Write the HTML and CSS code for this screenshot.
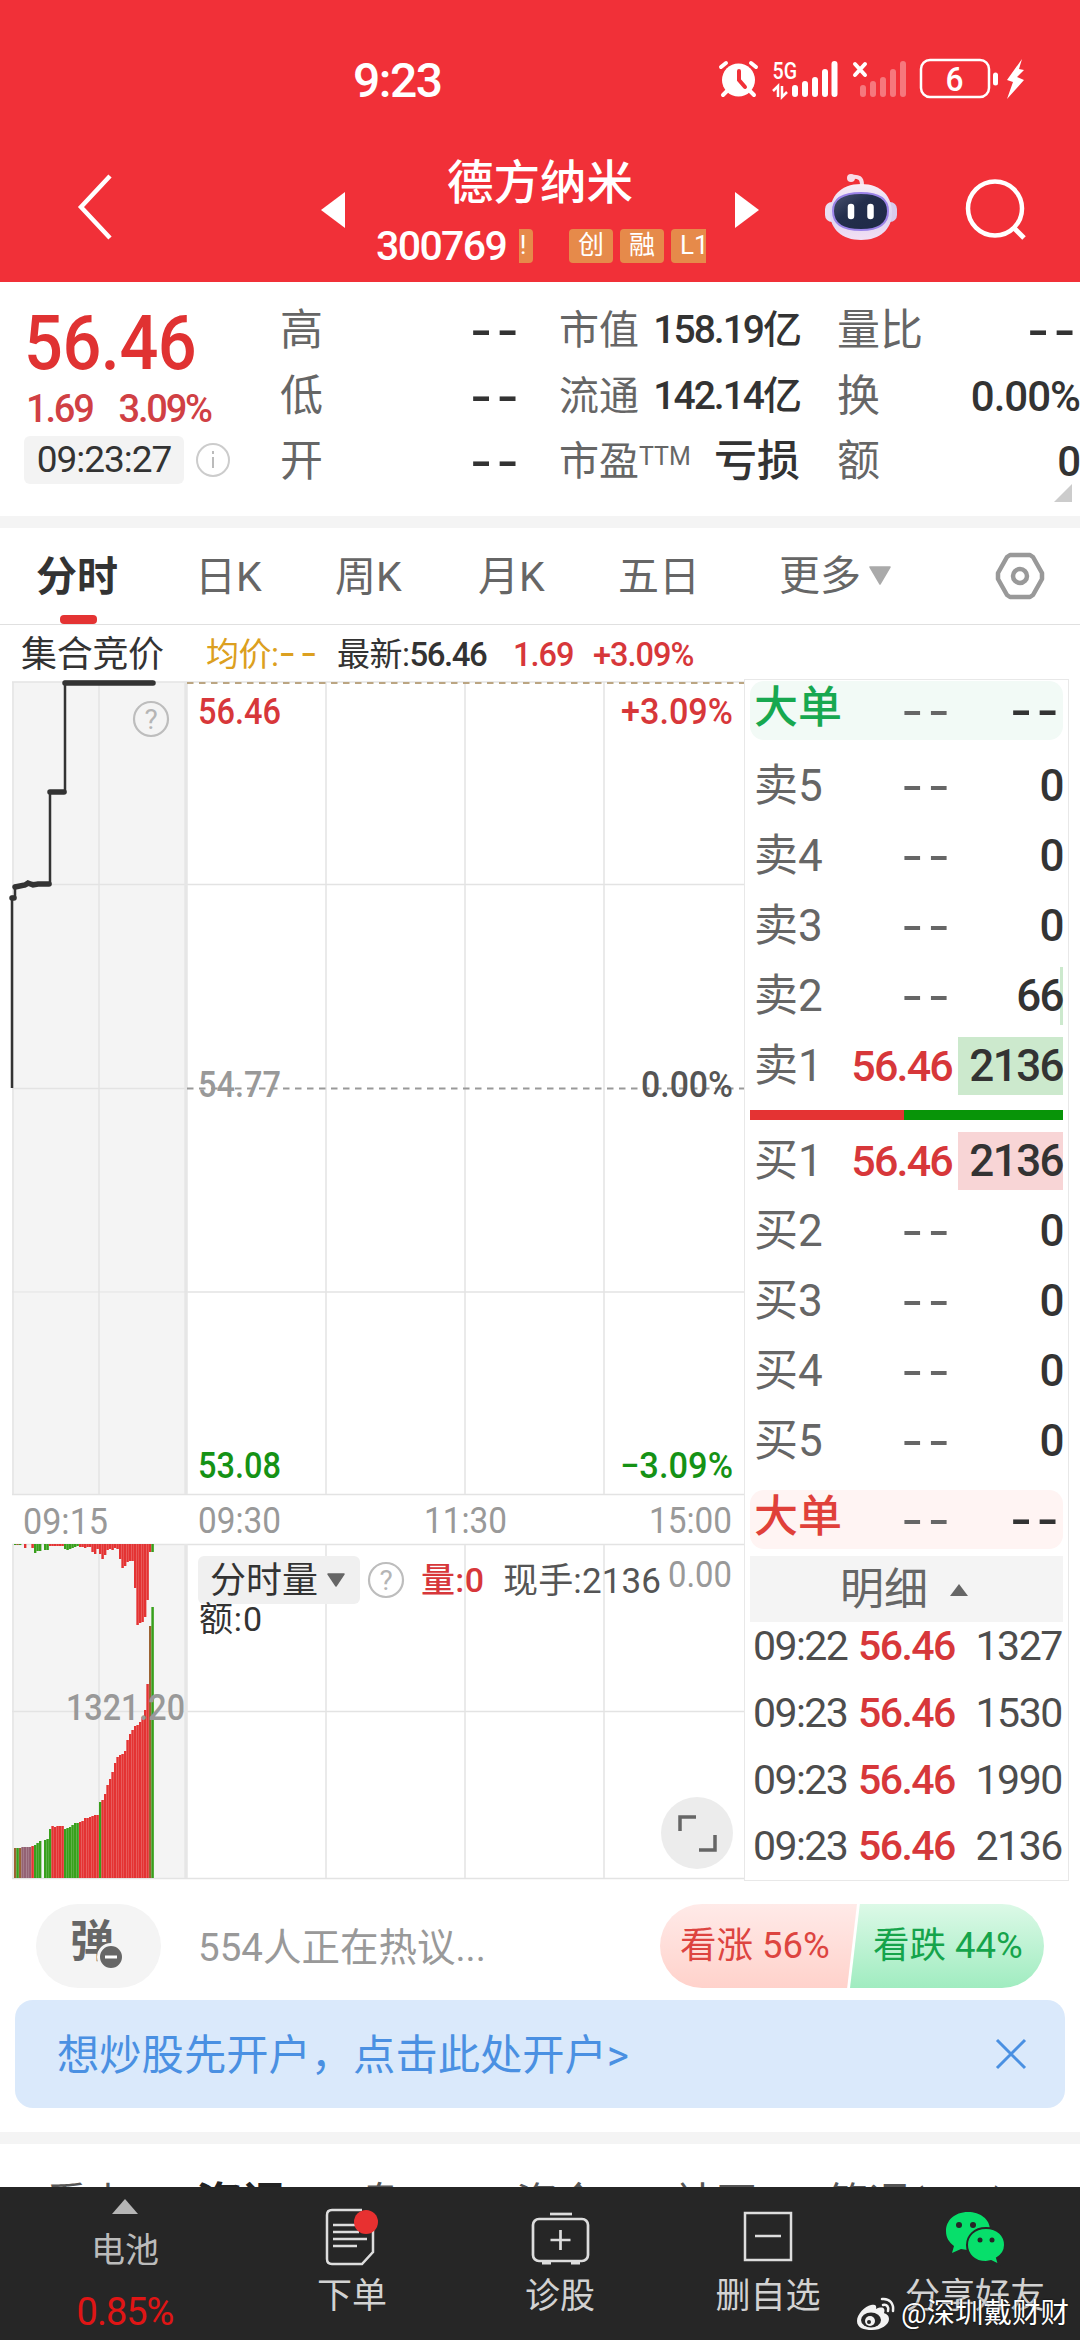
FILE: index.html
```html
<!DOCTYPE html>
<html lang="zh-CN">
<head>
<meta charset="utf-8">
<title>德方纳米 300769</title>
<link rel="stylesheet" href="styles.css">
</head>
<body>
<header class="top">
  <div class="status">
    <span class="clock">9:23</span>
    <svg class="status-icons" width="310" height="46" viewBox="716 56 310 46">
      <g fill="none" stroke="#fff" stroke-linecap="round">
        <circle cx="738.500" cy="80" r="16.500" fill="#fff" stroke="none"/>
        <path d="M721 67l5-4M756 67l-5-4M727 91l-4 4M750 91l4 4" stroke-width="4"/>
        <path d="M739 71v9l6 7" stroke="#f13038" stroke-width="4"/>
        <path d="M795 88v6M805 84v10M815 80v14M825 72v22M834.500 64v30" stroke-width="6"/>
        <path d="M863 88v6M873 84v10M883 80v14M893 72v22M903 64v30" stroke-width="6" opacity=".35"/>
        <path d="M855 64l10 11M865 64l-10 11" stroke-width="4"/>
        <rect x="921" y="60" width="68" height="37" rx="9" stroke-width="2.500"/>
        <path d="M995.500 75v8" stroke-width="5"/>
      </g>
      <path d="M1022 59l-15 21 6 2-6 17 17-19-7-3 7-7-5-1z" fill="#fff"/>
      <path d="M773 91l5-5v11M782 86v11l5-5" fill="none" stroke="#fff" stroke-width="2.500"/>
      <text x="772.500" y="78.500" font-size="24" textLength="24.500" lengthAdjust="spacingAndGlyphs" font-weight="500" fill="#fff">5G</text>
      <text x="945.500" y="91" font-size="34" textLength="18" lengthAdjust="spacingAndGlyphs" font-weight="500" fill="#fff">6</text>
    </svg>
  </div>
  <div class="nav">
    <svg class="back" width="40" height="68" viewBox="0 0 40 68"><path d="M35 3L6 34l29 31" fill="none" stroke="#fff" stroke-width="4.500"/></svg>
    <svg class="prev" width="24" height="36" viewBox="0 0 24 36"><path d="M24 0v36L0 18z" fill="#fff"/></svg>
    <div class="stock">
      <h1 class="name">德方纳米</h1>
      <div class="code-row">
        <span class="code">300769</span>
        <div class="tags"><span class="tag cut">!</span><span class="tag">创</span><span class="tag">融</span><span class="tag last">L1</span></div>
      </div>
    </div>
    <svg class="next" width="24" height="36" viewBox="0 0 24 36"><path d="M0 0v36l24-18z" fill="#fff"/></svg>
    <svg class="robot" width="74" height="68" viewBox="0 0 74 68">
      <defs>
        <linearGradient id="shell" x1="0" y1="0" x2="0" y2="1"><stop offset="0" stop-color="#f9edf6"/><stop offset=".55" stop-color="#dcd3f1"/><stop offset="1" stop-color="#f3dff4"/></linearGradient>
        <linearGradient id="visor" x1="0" y1="0" x2="1" y2="1"><stop offset="0" stop-color="#4b5472"/><stop offset=".4" stop-color="#232e4c"/><stop offset="1" stop-color="#1e2946"/></linearGradient>
      </defs>
      <path d="M27 4c8-1 11 1 11 8" fill="none" stroke="#f8dce8" stroke-width="4"/>
      <circle cx="27" cy="5" r="4" fill="#f8dce8"/>
      <rect x="1" y="29" width="16" height="20" rx="7" fill="#eadff2"/><rect x="57" y="29" width="16" height="20" rx="7" fill="#d8caec"/>
      <path d="M37 11C58 11 68 24 68 40S56 67 37 67 6 56 6 40 16 11 37 11z" fill="url(#shell)"/>
      <path d="M37 20C54 20 64 25 64 38S55 57 37 57 9 51 9 38 20 20 37 20z" fill="url(#visor)" stroke="#9b83e8" stroke-width="2"/>
      <path d="M27 34v9M46.500 34v9" stroke="#fff" stroke-width="6.500" stroke-linecap="round"/>
    </svg>
    <svg class="search" width="62" height="62" viewBox="0 0 62 62"><circle cx="30" cy="29.500" r="27" fill="none" stroke="#fff" stroke-width="4.500"/><path d="M48 48l11 11" stroke="#fff" stroke-width="5"/></svg>
  </div>
</header>

<section class="quote">
  <div class="price-col">
    <div class="price">56.46</div>
    <div class="change"><span>1.69</span><span>3.09%</span></div>
    <div class="time-row"><span class="time">09:23:27</span>
      <svg width="36" height="36" viewBox="0 0 36 36"><circle cx="18" cy="18" r="16" fill="none" stroke="#ccc" stroke-width="2"/><path d="M18 15v11M18 9v3" stroke="#bbb" stroke-width="2"/></svg>
    </div>
  </div>
  <dl class="stats s1">
    <div><dt>高</dt><dd class="dash">--</dd></div><div><dt>低</dt><dd class="dash">--</dd></div><div><dt>开</dt><dd class="dash">--</dd></div>
  </dl>
  <dl class="stats s2">
    <div><dt>市值</dt><dd>158.19亿</dd></div><div><dt>流通</dt><dd>142.14亿</dd></div><div><dt>市盈<sup>TTM</sup></dt><dd class="loss">亏损</dd></div>
  </dl>
  <dl class="stats s3">
    <div><dt>量比</dt><dd class="dash">--</dd></div><div><dt>换</dt><dd class="wide">0.00%</dd></div><div><dt>额</dt><dd class="wide">0</dd></div>
  </dl>
  <svg class="corner" width="18" height="18"><path d="M18 0v18H0z" fill="#ccc"/></svg>
</section>

<nav class="tabs">
  <span class="tab active">分时</span><span class="tab">日K</span><span class="tab">周K</span><span class="tab">月K</span><span class="tab">五日</span>
  <span class="tab more">更多<svg width="24" height="20" viewBox="0 0 24 20"><path d="M2 1h20L12 18z" fill="#aaa" stroke="#aaa" stroke-width="1.500" stroke-linejoin="round"/></svg></span>
  <svg class="gear" width="50" height="48" viewBox="0 0 50 48"><path d="M15 3h20l3 2 9 16v6l-9 16-3 2H15l-3-2-9-16v-6l9-16z" fill="none" stroke="#999" stroke-width="4.500" stroke-linejoin="round"/><circle cx="25" cy="24" r="7" fill="none" stroke="#999" stroke-width="4.500"/></svg>
</nav>

<main class="market">
  <div class="chart">
    <div class="legend">
      <span class="auction">集合竞价</span><span class="avg">均价:<i>--</i></span><span class="last-price">最新:<b>56.46</b></span><span class="red">1.69</span><span class="red pct">+3.09%</span>
    </div>
    <svg class="plot" width="745" height="1203" viewBox="0 679 745 1203">
      <path d="M12 682h174v812H12zM12 1544h174v334H12z" fill="#f4f4f4"/>
      <g fill="none" stroke="#e3e3e3" stroke-width="1.500">
        <path d="M12 682h733M12 884.500h733M12 1088.500h175M187 1292h558M12 1494.500h733M12 1544.500h733M12 1711.500h733M12 1878.500h733"/>
        <path d="M13 682v812M13 1544v334M99 682v812M99 1544v334M326 682v812M326 1544v334M465 682v812M465 1544v334M604 682v812M604 1544v334"/>
        <path d="M186 682v812M186 1544v334" stroke="#e6e6e6" stroke-width="3.500"/>
      </g>
      <path d="M12 1292h175" stroke="#e3e3e3"/>
      <path d="M187 683h558" stroke="#bba582" stroke-width="2" stroke-dasharray="6.500 5.500"/>
      <path d="M187 1088.500h558" stroke="#999" stroke-width="1.800" stroke-dasharray="6.500 5.500"/>
      <path d="M12 1088V897H15V886L25 886 32 883 50 884V792H65V682H153" fill="none" stroke="#333" stroke-width="2.500"/>
      <path d="M12 898h2M15 887l10-2 3-2 5 2 5-1h11M50 792h14M65 683h88" fill="none" stroke="#333" stroke-width="5.500" stroke-linecap="round"/>
      <g id="bars"></g>
      <g fill="none" stroke="#bdbdbd" stroke-width="2.200"><circle cx="151" cy="719" r="17"/><circle cx="386" cy="1580" r="17"/></g>
      <g font-size="28" fill="#b5b5b5" text-anchor="middle"><text x="151" y="729">?</text><text x="386" y="1590">?</text></g>
      <g font-size="36" font-weight="500">
        <g fill="#d7373a"><text x="198" y="724" textLength="83" lengthAdjust="spacingAndGlyphs">56.46</text><text x="621" y="724" textLength="112" lengthAdjust="spacingAndGlyphs">+3.09%</text></g>
        <text x="198" y="1097" textLength="83" lengthAdjust="spacingAndGlyphs" fill="#999">54.77</text>
        <text x="641" y="1097" textLength="92" lengthAdjust="spacingAndGlyphs" fill="#555">0.00%</text>
        <g fill="#159215"><text x="198" y="1478" textLength="83" lengthAdjust="spacingAndGlyphs">53.08</text><text x="620" y="1478" textLength="113" lengthAdjust="spacingAndGlyphs">−3.09%</text></g>
      </g>
      <g font-size="36" fill="#999">
        <text x="23" y="1534" textLength="85" lengthAdjust="spacingAndGlyphs">09:15</text><text x="198" y="1533" textLength="83" lengthAdjust="spacingAndGlyphs">09:30</text><text x="424" y="1533" textLength="83" lengthAdjust="spacingAndGlyphs">11:30</text><text x="649" y="1533" textLength="83" lengthAdjust="spacingAndGlyphs">15:00</text>
        <text x="66" y="1720" textLength="119" lengthAdjust="spacingAndGlyphs" font-weight="500">1321.20</text><text x="668" y="1587" textLength="64" lengthAdjust="spacingAndGlyphs">0.00</text>
      </g>
      <rect x="198" y="1556" width="162" height="48" rx="6" fill="#f0f0f0"/>
      <path d="M328 1574h16l-8 12z" fill="#666" stroke="#666" stroke-width="1.500" stroke-linejoin="round"/>
      <text x="210" y="1593" font-size="36" textLength="108" fill="#333">分时量</text>
      <text x="199" y="1631" font-size="34" textLength="63" fill="#333">额:0</text>
      <text x="421" y="1592" font-size="34" textLength="63" fill="#d7373a" font-weight="500">量:0</text>
      <text x="503" y="1593" font-size="35" textLength="158" fill="#555">现手:2136</text>
      <circle cx="697" cy="1833" r="36" fill="#ececec"/>
      <path d="M680 1831v-14h16M715 1835v15h-16" fill="none" stroke="#666" stroke-width="3.500"/>
    </svg>
  </div>

  <aside class="book">
    <div class="row big sell"><span>大单</span><em>--</em><b class="dashb">--</b></div>
    <div class="side sells">
      <div class="row"><span>卖5</span><em>--</em><b>0</b></div>
      <div class="row"><span>卖4</span><em>--</em><b>0</b></div>
      <div class="row"><span>卖3</span><em>--</em><b>0</b></div>
      <div class="row"><span>卖2</span><em>--</em><b class="sliver">66</b></div>
      <div class="row"><span>卖1</span><strong>56.46</strong><b class="fill-green">2136</b></div>
    </div>
    <div class="ratio"></div>
    <div class="side buys">
      <div class="row"><span>买1</span><strong>56.46</strong><b class="fill-red">2136</b></div>
      <div class="row"><span>买2</span><em>--</em><b>0</b></div>
      <div class="row"><span>买3</span><em>--</em><b>0</b></div>
      <div class="row"><span>买4</span><em>--</em><b>0</b></div>
      <div class="row"><span>买5</span><em>--</em><b>0</b></div>
    </div>
    <div class="row big buy"><span>大单</span><em>--</em><b class="dashb">--</b></div>
    <div class="detail-head">明细<svg width="18" height="12"><path d="M9 0l9 12H0z" fill="#666"/></svg></div>
    <div class="ticks">
      <div class="tick"><span>09:22</span><strong>56.46</strong><b>1327</b></div>
      <div class="tick"><span>09:23</span><strong>56.46</strong><b>1530</b></div>
      <div class="tick"><span>09:23</span><strong>56.46</strong><b>1990</b></div>
      <div class="tick"><span>09:23</span><strong>56.46</strong><b>2136</b></div>
    </div>
  </aside>
</main>

<section class="forum">
  <div class="danmu"><span class="dan">弹</span>
    <svg class="minus" width="28" height="28" viewBox="0 0 28 28"><circle cx="14" cy="14" r="12.500" fill="#666" stroke="#f4f4f4" stroke-width="3"/><path d="M8 14h12" stroke="#fff" stroke-width="3"/></svg>
  </div>
  <span class="hint">554人正在热议...</span>
  <div class="vote"><span class="up">看涨 56%</span><span class="down">看跌 44%</span></div>
</section>

<section class="banner"><span>想炒股先开户，点击此处开户&gt;</span>
  <svg width="32" height="32" viewBox="0 0 32 32"><path d="M2 2l28 28M30 2L2 30" stroke="#4a90e2" stroke-width="3"/></svg>
</section>

<nav class="subtabs"><span>看点</span><span class="on">资讯</span><span>盘口</span><span>资金</span><span>社区</span><span>简况(F10)</span></nav>

<footer class="dock">
  <div class="battery"><svg width="26" height="15"><path d="M13 0l13 15H0z" fill="#b5b5b5"/></svg><span>电池</span><b>0.85%</b></div>
  <div class="item order">
    <svg width="56" height="58" viewBox="0 0 56 58"><g fill="none" stroke="#ddd" stroke-width="2.500"><path d="M49 20v24L38 56H8q-5 0-5-5V7q0-5 5-5h30"/><path d="M9 17h24M9 24h26M9 31h34M9 38h24"/></g><circle cx="42" cy="14" r="12" fill="#e83030"/></svg>下单</div>
  <div class="item diag">
    <svg width="60" height="58" viewBox="0 0 60 58"><g fill="none" stroke="#ddd" stroke-width="2.700"><path d="M20 6h22"/><rect x="3" y="11" width="55" height="42" rx="6"/><path d="M30.500 22v20M20.500 32h20"/><path d="M12 55h9M41 55h9" stroke-width="3"/></g></svg>诊股</div>
  <div class="item del">
    <svg width="52" height="58" viewBox="0 0 52 58"><g fill="none" stroke="#ddd" stroke-width="2.500"><rect x="3" y="5" width="46" height="47"/><path d="M13 28h26"/></g></svg>删自选</div>
  <div class="item share">
    <svg width="62" height="58" viewBox="0 0 62 58"><path d="M24 4C10 4 2 13 2 23c0 7 3 11 8 15l-2 7 9-4q5 1 9 1C38 41 46 33 46 22S36 4 24 4z" fill="#07df6b"/><path d="M42 20c-12 0-19 8-19 17s7 17 19 17l5-1 8 4-2-7c5-3 8-7 8-13 0-9-7-17-19-17z" fill="#07df6b" stroke="#262626" stroke-width="2"/><g fill="#262626"><circle cx="15" cy="17" r="3"/><circle cx="29" cy="17" r="3"/><circle cx="36" cy="32" r="2.500"/><circle cx="48" cy="32" r="2.500"/></g></svg>分享好友</div>
  <div class="watermark">
    <svg width="40" height="36" viewBox="0 0 40 36"><path d="M15 9C9 10 1 18 1 25s7 9 15 9c9 0 17-5 17-11 0-4-3-5-5-6 2-5-2-7-8-4 1-4-1-5-5-4z" fill="#f2f2f2"/><ellipse cx="15" cy="24" rx="10" ry="7.500" fill="#262626"/><circle cx="14" cy="25" r="5" fill="#f2f2f2"/><circle cx="13" cy="26" r="2" fill="#262626"/><path d="M26 3c8-1 12 5 11 12M27 9c4-1 6 2 5 6" fill="none" stroke="#f2f2f2" stroke-width="2.500" stroke-linecap="round"/></svg>
    <span>@深圳戴财财</span></div>
</footer>
<script src="bars.js"></script>
</body>
</html>
```
FILE: bars.js
```js
// Call-auction volume: matched bars rise from the floor, unmatched bars hang from the ceiling.
var STEP = 2.5, LEFT = 14, FLOOR = 1878, CEIL = 1544;
var RED = '#e43333', GREEN = '#38a01c';
var matched = [
  30, 30, 30, 31, 31, 31, 31, 32, 33, 35, 37, 0, 38, 39, 49, 52, 51, 52, 52, 52,
  49, 50, 51, 53, 55, 55, 56, 57, 60, 60, 61, 62, 63, 63, 76, 78, 84, 93, 99, 106,
  115, 121, 123, 124, 127, 138, 144, 148, 152, 153, 156, 161, 168, 194, 252, 271
];
var matchedKind = 'bgbpppprggg.gggrrrrrggggggrrrrrrrrgrrrrrrrrrrrrrrrrrrrbg';
var pending = [
  1, 1, 1, 0, 4, 0, 0, 4, 9, 7, 7, 0, 6, 6, 2, 2, 2, 2, 2, 2,
  5, 6, 5, 4, 3, 2, 3, 3, 4, 3, 3, 8, 10, 5, 10, 15, 11, 6, 5, 6,
  4, 5, 15, 24, 22, 18, 17, 17, 44, 81, 79, 78, 73, 56, 8, 8
];
var pendingKind = 'gbg.r..rggg.ggrrrrrrggggggrrrrrrrrrrrrrrrrrrrrrrrrrrrrrg';
var colors = { r: RED, g: GREEN, b: '#9b6332', p: '#946274' };
var out = '';
function bar(i, y, h, kind) {
  if (!h) return;
  var at = '<rect x="' + (LEFT + i * STEP) + '" y="' + y + '" height="' + h + '" fill="' + (colors[kind] || RED) + '" width="';
  out += at + '2.5" opacity=".6"/>' + at + '2.1"/>';
}
matched.forEach(function (h, i) { bar(i, FLOOR - h, h, matchedKind[i]); });
pending.forEach(function (h, i) { bar(i, CEIL, h, pendingKind[i]); });
document.getElementById('bars').innerHTML = out;
```
FILE: styles.css
```css
* { box-sizing: border-box; margin: 0; padding: 0; }
body { width: 1080px; height: 2340px; overflow: hidden; background: #fff; color: #333; font-family: Roboto, "Noto Sans CJK SC", sans-serif; font-size: 40px; display: flex; flex-direction: column; }
svg { display: block; flex: none; }
span, b, strong, em, dd, dt { white-space: nowrap; }
em, i { font-style: normal; }

/* header */
.top { height: 282px; background: #f13038; color: #fff; flex: none; }
.status { height: 158px; padding: 0 54px 0 353px; display: flex; justify-content: space-between; align-items: center; }
.clock { font-size: 48px; font-weight: 500; letter-spacing: -1.5px; padding-top: 2px; }
.nav { height: 124px; display: flex; align-items: flex-start; }
.back { margin: 15px 0 0 75px; }
.prev { margin: 34px 0 0 206px; }
.stock { width: 390px; padding-left: 31px; }
.name { font-size: 46.500px; font-weight: 500; line-height: 50px; padding-left: 71px; }
.code-row { display: flex; align-items: center; height: 34px; margin-top: 21px; }
.code { font-size: 41px; font-weight: 500; letter-spacing: -1.600px; width: 143px; }
.tags { display: flex; width: 187px; overflow: hidden; gap: 7px; }
.tag { width: 44px; height: 34px; flex: none; background: #e68a4a; border-radius: 4px; font-size: 26px; line-height: 33px; text-align: center; }
.tag.cut { width: 14px; margin-right: 29px; border-radius: 0 4px 4px 0; text-indent: -6px; }
.tag.last { text-align: left; padding-left: 9px; }
.next { margin-top: 34px; }
.robot { margin: 15px 0 0 65px; }
.search { margin: 21px 0 0 67px; }

/* quote */
.quote { height: 246px; flex: none; border-bottom: 12px solid #f4f4f4; display: flex; position: relative; padding-top: 16px; }
.price-col { width: 280px; padding-left: 24px; flex: none; }
.price { font-size: 76px; font-weight: 500; line-height: 90px; color: #e03232; transform: scaleX(.9); transform-origin: 0 0; letter-spacing: -.500px; }
.change { display: flex; gap: 26px; font-size: 38px; line-height: 42px; color: #d04044; letter-spacing: -2.200px; padding: 0 0 2px 2px; font-weight: 500; }
.time-row { display: flex; align-items: center; gap: 11px; margin-top: 4px; }
.time { width: 160px; height: 48px; border-radius: 6px; background: #f3f3f3; font-size: 37px; line-height: 48px; text-align: center; letter-spacing: -1px; }
.stats { flex: none; font-size: 43px; line-height: 65.500px; }
.stats > div { display: flex; justify-content: space-between; height: 65.500px; }
.stats dt { color: #666; }
.stats dd { text-align: right; font-weight: 500; }
.s1 { width: 241px; }
.s2 { width: 241px; margin-left: 38px; font-size: 40px; }
.s2 dd { font-size: 39px; letter-spacing: -2px; }
.s2 .loss { font-size: 43px; letter-spacing: 0; }
.s3 { width: 243px; margin-left: 37px; }
.s3 .wide { font-weight: 500; letter-spacing: -1px; font-size: 42px; }
.stats .dash, .row em, .row .dashb { font-family: Inter, sans-serif; font-size: 49px; letter-spacing: 4px; }
.stats .dash { font-weight: 500; margin-right: -2px; }
.s3 .dash { margin-right: 0; }
sup { font-size: 25px; line-height: 0; vertical-align: 10px; }
.corner { position: absolute; right: 8px; bottom: 14px; }

/* tabs */
.tabs { height: 97px; flex: none; border-bottom: 1px solid #e0e0e0; display: grid; grid-template-columns: 159px 140px 143px 140px 161px 216px 50px; padding-left: 36px; color: #666; font-size: 41px; line-height: 98px; }
.tab.active { font-weight: 700; color: #333; }
.tab.active::after { content: ""; display: block; width: 37px; height: 9px; margin: -11px 0 0 24px; border-radius: 4px; background: #e43333; }
.more { display: flex; align-items: center; gap: 7px; height: 96px; }
.gear { margin-top: 24px; }

/* chart */
.market { height: 1257px; flex: none; display: flex; }
.chart { width: 744px; flex: none; }
.legend { height: 54px; display: grid; grid-template-columns: 185px 131px 176px 80px 1fr; padding: 5px 0 0 21px; font-size: 33px; line-height: 50px; letter-spacing: -.500px; }
.auction { font-size: 36px; letter-spacing: -.300px; }
.avg { color: #dca020; }
.avg i { font-family: Inter, sans-serif; letter-spacing: 4px; font-size: 38px; line-height: 0; }
.last-price b { font-weight: 500; letter-spacing: -1.500px; }
.red { color: #d7373a; font-weight: 500; font-size: 32.500px; letter-spacing: -1px; }
.plot text { font-family: Roboto, "Noto Sans CJK SC", sans-serif; }

/* order book */
.book { width: 325px; height: 1202px; margin-top: 54px; padding: 1px 5px 0; border: 1px solid #e8e8e8; display: flex; flex-direction: column; }
.row { height: 70px; display: grid; grid-template-columns: 93px 115px 105px; align-items: center; flex: none; }
.row > * { line-height: 58px; }
.row span { color: #666; font-size: 44px; padding-left: 4px; }
.row em { color: #666; text-align: right; padding-right: 4px; }
.row b { font-size: 44px; font-weight: 500; text-align: right; height: 58px; letter-spacing: -1.600px; }
.row strong { font-size: 43px; font-weight: 500; color: #d7373a; text-align: right; padding-right: 6px; letter-spacing: -1.800px; }
.row .dashb { letter-spacing: 4px; font-size: 49px; }
.row.big { height: 59px; border-radius: 14px; }
.row.big span { line-height: 52px; padding-bottom: 5px; font-weight: 500; font-size: 44px; }
.row.sell { background: #f2faf6; }
.row.sell span { color: #18a850; }
.row.buy { background: #fff4f3; }
.row.buy span { color: #e0403a; }
.sells { margin-top: 11px; }
.fill-green { background: #cce9cd; }
.fill-red { background: #f8d5d6; }
.sliver { background: linear-gradient(#cce9cd, #cce9cd) right / 3px 100% no-repeat; }
.ratio { height: 10px; margin: 9px 0 6px; background: linear-gradient(90deg, #e43333 49.300%, #089408 49.300%); width: 313px; flex: none; }
.buys { margin-bottom: 14px; }
.detail-head { margin-top: 7px; height: 66px; background: #f4f4f4; color: #666; font-size: 44px; line-height: 66px; display: flex; align-items: center; gap: 22px; padding: 2px 0 0 90px; width: 313px; flex: none; }
.ticks { margin-top: -9px; }
.tick { height: 66.800px; line-height: 67px; display: grid; grid-template-columns: 105px 98px 106px; padding-left: 3px; font-size: 41px; color: #4d4d4d; letter-spacing: -1.400px; }
.tick strong { color: #d7373a; font-weight: 500; }
.tick b { font-weight: 400; text-align: right; }
.tick strong, .tick span { letter-spacing: -1.600px; }

/* discussion */
.forum { height: 84px; margin: 22px 36px 0; display: flex; flex: none; align-items: center; }
.danmu { width: 125px; height: 84px; border-radius: 42px; background: #f4f4f4; position: relative; padding-left: 34px; }
.dan { font-size: 44px; font-weight: 700; line-height: 76px; color: #666; }
.minus { position: absolute; left: 61px; top: 39px; }
.hint { color: #999; font-size: 38.500px; margin-left: 37px; flex: 1; padding-bottom: 4px; }
.vote { display: flex; width: 384px; height: 84px; border-radius: 42px; overflow: hidden; font-size: 36.500px; line-height: 83px; }
.vote span { width: 197px; flex: none; }
.up { color: #dd4440; background: linear-gradient(#ffeae8, #ffd2cb); clip-path: polygon(0 0, 100% 0, 95% 100%, 0 100%); padding-left: 20px; }
.down { color: #15a44b; background: linear-gradient(#dcf9e7, #a0ecc0); clip-path: polygon(5% 0, 100% 0, 100% 100%, 0 100%); margin-left: -7px; padding-left: 23px; }

.banner { margin: 12px 15px 24px; height: 108px; flex: none; border-radius: 18px; background: #dae9fb; color: #4a90e2; display: flex; align-items: center; justify-content: space-between; padding: 0 38px 0 42px; font-size: 42.300px; }
.banner span { padding-bottom: 5px; }

.subtabs { height: 55px; flex: none; border-top: 12px solid #f4f4f4; overflow: hidden; display: grid; grid-template-columns: 150px 163px 157px 158px 153px 1fr; padding: 33px 0 0 46px; color: #555; font-size: 41.500px; line-height: 54px; }
.subtabs .on { font-weight: 700; color: #222; font-size: 46px; line-height: 55px; }

/* bottom bar */
.dock { height: 153px; flex: none; background: #262626; color: #d2d2d2; display: flex; position: relative; font-size: 35px; }
.battery { width: 250px; display: flex; flex-direction: column; align-items: center; padding-top: 12px; font-size: 34px; color: #bbb; line-height: 50px; }
.battery span { margin-top: 11px; }
.battery b { color: #e01515; font-weight: 400; font-size: 38px; margin-top: 12px; letter-spacing: -1px; }
.item { display: flex; flex-direction: column; align-items: center; padding-top: 21px; line-height: 50px; gap: 6px; flex: none; }
.order { width: 204px; }
.diag { width: 212px; }
.del { width: 204px; }
.share { width: 210px; }
.watermark { position: absolute; left: 856px; top: 106px; display: flex; align-items: center; gap: 5px; color: #fff; font-size: 28.500px; line-height: 42px; text-shadow: 0 0 2px #000; }
```
